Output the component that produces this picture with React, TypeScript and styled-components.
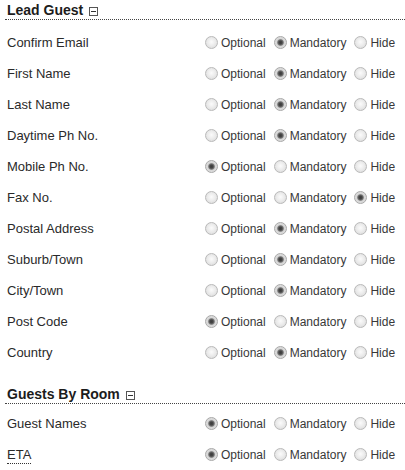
import React from "react";
import styled, { createGlobalStyle } from "styled-components";

const GlobalStyle = createGlobalStyle`
  html, body {
    margin: 0;
    padding: 0;
    background: #ffffff;
  }
  body {
    font-family: "Liberation Sans", Arial, sans-serif;
    color: #333333;
  }
`;

const Page = styled.div`
  width: 405px;
  display: flex;
  flex-direction: column;
`;

const Section = styled.section<{ $first?: boolean }>`
  display: flex;
  flex-direction: column;
  margin-top: ${(p) => (p.$first ? "0" : "16px")};
`;

const SectionHeader = styled.h2<{ $gap: number }>`
  margin: 0 0 ${(p) => p.$gap}px 5px;
  padding: 2px 0 0 2px;
  height: 17px;
  line-height: 17px;
  font-size: 14px;
  font-weight: bold;
  color: #1c1c1c;
  border-bottom: 1px dotted #444444;
  display: flex;
  align-items: center;
`;

const Toggle = styled.span`
  display: inline-flex;
  align-items: center;
  justify-content: center;
  width: 7px;
  height: 7px;
  margin-left: 6px;
  margin-top: 1px;
  border: 1px solid #555555;
  box-sizing: content-box;
  &::after {
    content: "";
    width: 5px;
    height: 1px;
    background: #333333;
  }
`;

const Row = styled.div`
  display: flex;
  align-items: center;
  height: 31px;
`;

const Label = styled.div`
  width: 200px;
  box-sizing: border-box;
  padding-left: 7px;
  font-size: 13px;
  color: #2a2a2a;
`;

const Abbr = styled.abbr`
  text-decoration: none;
  border-bottom: 1px dotted #333333;
  padding-bottom: 1px;
  cursor: help;
`;

const Options = styled.div`
  display: flex;
  align-items: center;
  gap: 3px;
`;

const Option = styled.label`
  display: inline-flex;
  align-items: center;
  font-size: 12px;
  color: #383838;
`;

const Radio = styled.input.attrs({ type: "radio" })`
  appearance: none;
  -webkit-appearance: none;
  width: 13px;
  height: 13px;
  margin: 0 3px 0 5px;
  box-sizing: border-box;
  border-radius: 50%;
  border: 1px solid #b9b9b9;
  background: radial-gradient(
    circle at 50% 45%,
    #fbfbfb 0,
    #ececec 45%,
    #d6d6d6 100%
  );
  &:checked {
    border-color: #a8a8a8;
    background: radial-gradient(
      circle at 50% 50%,
      #3c3c3c 0,
      #474747 1.6px,
      #7a7a7a 2.8px,
      #d6d6d6 3.8px,
      #e6e6e6 100%
    );
  }
`;

type Choice = "Optional" | "Mandatory" | "Hide";

const CHOICES: Choice[] = ["Optional", "Mandatory", "Hide"];

const leadRows: { label: string; value: Choice }[] = [
  { label: "Confirm Email", value: "Mandatory" },
  { label: "First Name", value: "Mandatory" },
  { label: "Last Name", value: "Mandatory" },
  { label: "Daytime Ph No.", value: "Mandatory" },
  { label: "Mobile Ph No.", value: "Optional" },
  { label: "Fax No.", value: "Hide" },
  { label: "Postal Address", value: "Mandatory" },
  { label: "Suburb/Town", value: "Mandatory" },
  { label: "City/Town", value: "Mandatory" },
  { label: "Post Code", value: "Optional" },
  { label: "Country", value: "Mandatory" },
];

const FieldRow: React.FC<{ name: string; label: React.ReactNode; value: Choice }> = ({
  name,
  label,
  value,
}) => (
  <Row>
    <Label>{label}</Label>
    <Options>
      {CHOICES.map((c) => (
        <Option key={c}>
          <Radio name={name} defaultChecked={c === value} />
          {c}
        </Option>
      ))}
    </Options>
  </Row>
);

export default function App() {
  return (
    <Page>
      <GlobalStyle />
      <Section $first>
        <SectionHeader $gap={7}>
          Lead Guest
          <Toggle />
        </SectionHeader>
        {leadRows.map((r) => (
          <FieldRow key={r.label} name={r.label} label={r.label} value={r.value} />
        ))}
      </Section>
      <Section>
        <SectionHeader $gap={4}>
          Guests By Room
          <Toggle />
        </SectionHeader>
        <FieldRow name="guest-names" label="Guest Names" value="Optional" />
        <FieldRow
          name="eta"
          label={<Abbr title="Estimated Time of Arrival">ETA</Abbr>}
          value="Optional"
        />
      </Section>
    </Page>
  );
}
